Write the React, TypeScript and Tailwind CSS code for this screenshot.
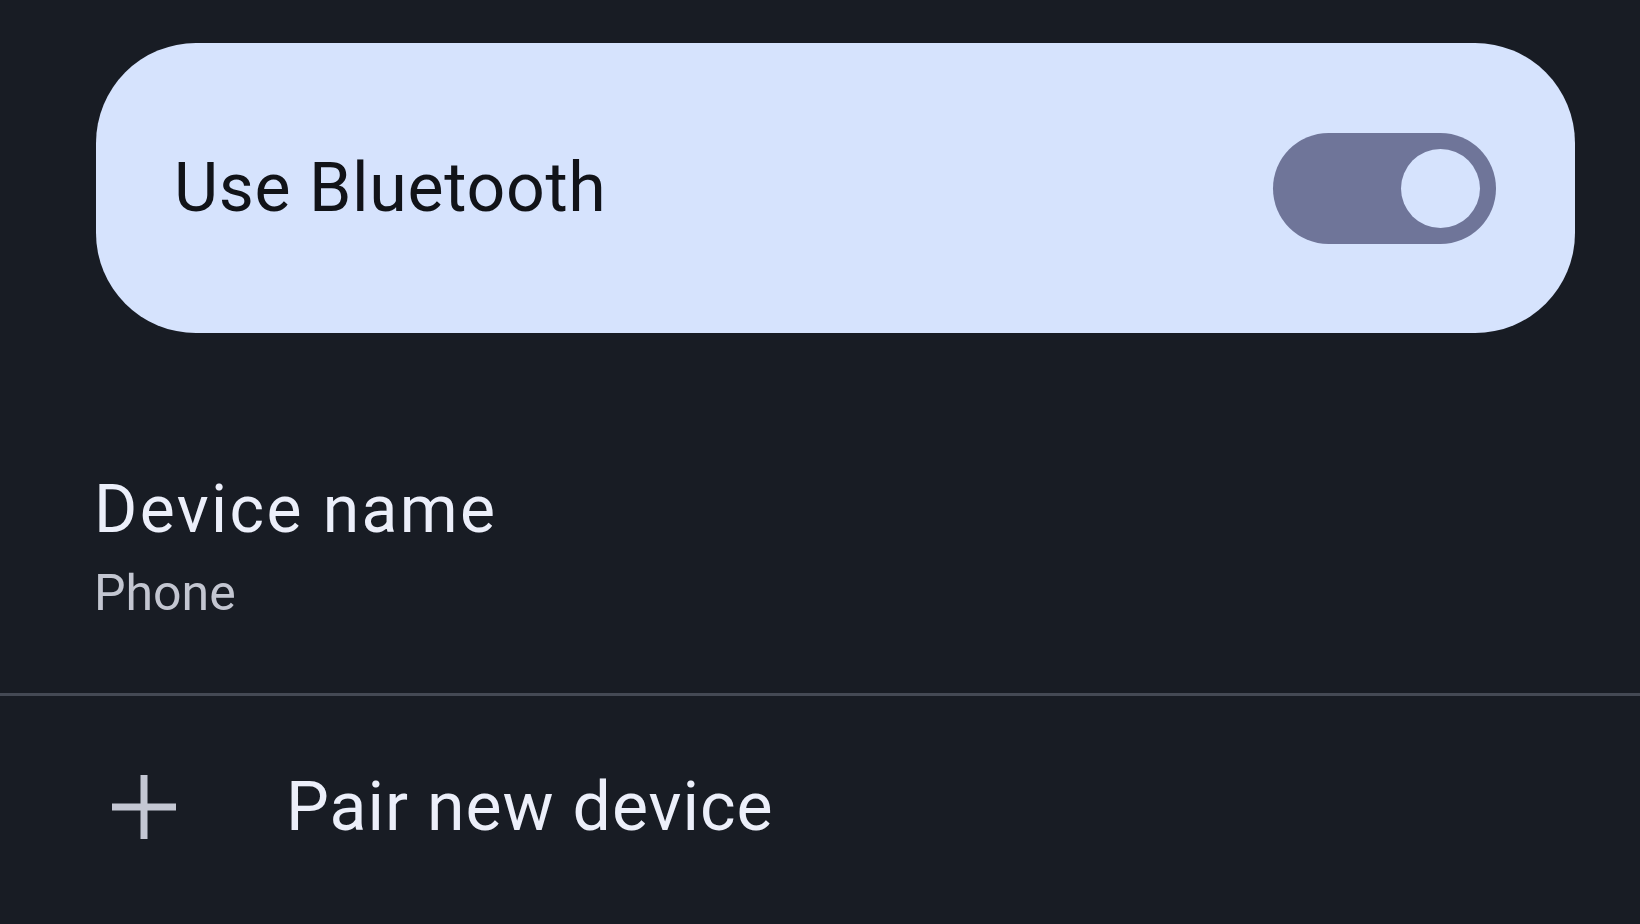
const PlusIcon = () => {
  return (
    <svg width="64" height="64" viewBox="0 0 64 64" fill="none" className="shrink-0">
      <path d="M32 0V64M0 32H64" stroke="#c4c7d3" strokeWidth="7" />
    </svg>
  );
};

const Toggle = () => {
  return (
    <div className="w-[223px] h-[111px] rounded-full bg-[#6f7599] flex items-center justify-end pr-[16px] shrink-0">
      <div className="w-[79px] h-[79px] rounded-full bg-[#d6e3fd]"></div>
    </div>
  );
};

export default function App() {
  return (
    <div className="w-full h-[924px] bg-[#181c24] overflow-hidden font-['Roboto','Liberation_Sans',sans-serif]">
      <div className="pt-[43px] pl-[96px] pr-[65px]">
        <div className="h-[290px] rounded-[100px] bg-[#d6e3fd] flex items-center justify-between pl-[78px] pr-[79px]">
          <span className="text-[68px] leading-none tracking-[0.7px] text-[#111318]">Use Bluetooth</span>
          <Toggle />
        </div>
      </div>

      <div className="pt-[144px] pl-[94px] flex flex-col gap-[25px]">
        <span className="text-[66px] leading-none tracking-[2.4px] text-[#eceffa]">Device name</span>
        <span className="text-[50px] leading-none text-[#c3c6d1]">Phone</span>
      </div>

      <div className="mt-[75px] h-[3px] w-full bg-[#444954]"></div>

      <div className="mt-[77px] pl-[112px] flex items-center gap-[110px]">
        <PlusIcon />
        <span className="text-[68px] leading-none tracking-[1px] text-[#eceffa]">Pair new device</span>
      </div>
    </div>
  );
}
